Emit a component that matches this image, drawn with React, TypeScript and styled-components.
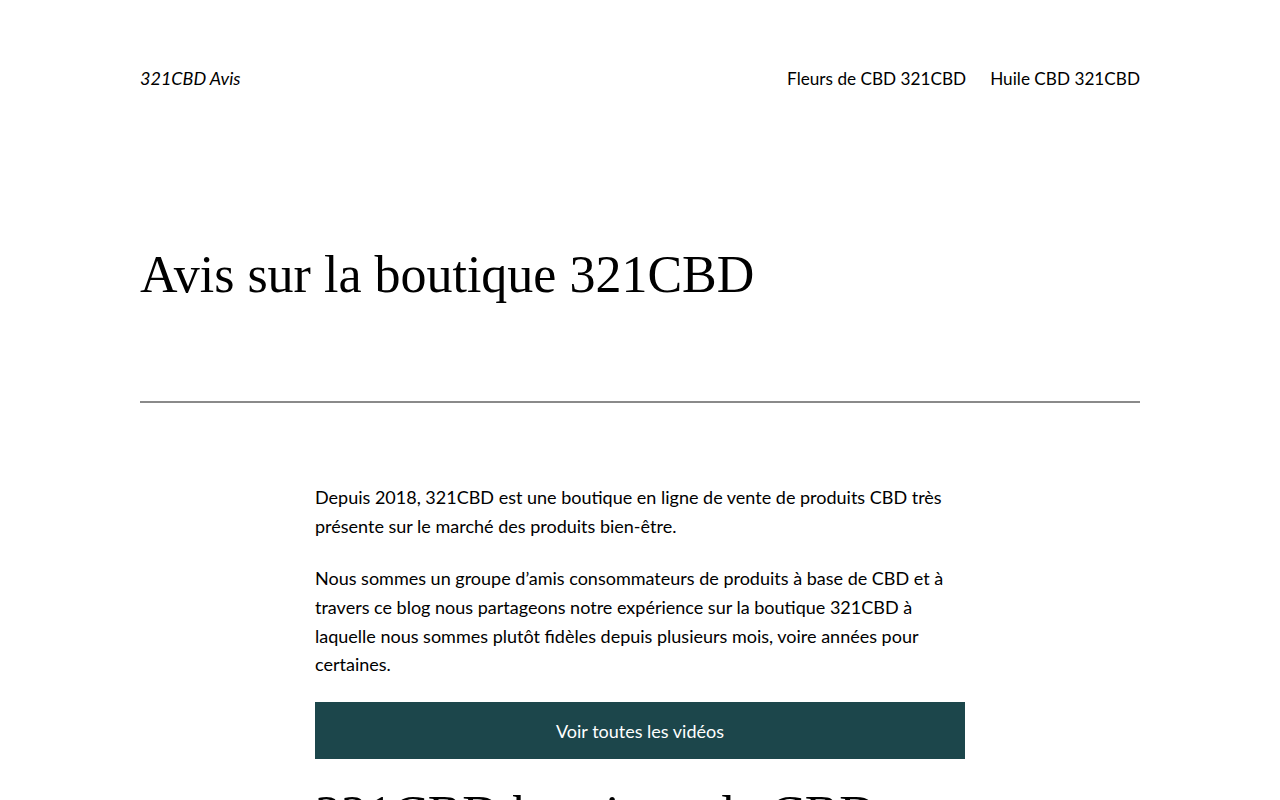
import React from "react";
import styled, { createGlobalStyle } from "styled-components";

const GlobalStyle = createGlobalStyle`
	html, body {
		margin: 0;
		padding: 0;
		background: #ffffff;
	}
	body {
		font-family: "Lato", "Noto Sans", sans-serif;
		color: #000000;
		-webkit-font-smoothing: antialiased;
	}
`;

const Page = styled.div`
	width: 1000px;
	margin: 0 auto;
	padding-top: 66px;
`;

const Header = styled.header`
	display: flex;
	align-items: center;
	justify-content: space-between;
	height: 24px;
`;

const SiteTitle = styled.a`
	font-size: 18px;
	font-style: italic;
	color: #000;
	text-decoration: none;
`;

const Nav = styled.nav`
	display: flex;
	gap: 24px;
`;

const NavLink = styled.a`
	font-size: 17.2px;
	color: #000;
	text-decoration: none;
`;

const PageTitle = styled.h1`
	font-family: "Liberation Serif", "Times New Roman", serif;
	font-weight: 400;
	font-size: 52px;
	line-height: 1.2;
	margin: 154px 0 0;
`;

const Separator = styled.hr`
	border: none;
	border-top: 2px solid #8a8a8a;
	margin: 95px 0 0;
`;

const Content = styled.main`
	width: 650px;
	margin: 80px auto 0;
`;

const Paragraph = styled.p`
	font-size: 18px;
	line-height: 1.6;
	margin: 0 0 23px;
`;

const WideButton = styled.a`
	display: flex;
	align-items: center;
	justify-content: center;
	height: 57px;
	margin-top: 6px;
	background: #1c464b;
	color: #ffffff;
	font-size: 18px;
	text-decoration: none;
`;

const SectionTitle = styled.h2`
	font-family: "Liberation Serif", "Times New Roman", serif;
	font-weight: 400;
	font-size: 52px;
	line-height: 1.2;
	margin: 25px 0 0;
`;

export default function App() {
	return (
		<>
			<GlobalStyle />
			<Page>
				<Header>
					<SiteTitle href="#">321CBD Avis</SiteTitle>
					<Nav>
						<NavLink href="#">Fleurs de CBD 321CBD</NavLink>
						<NavLink href="#">Huile CBD 321CBD</NavLink>
					</Nav>
				</Header>
				<PageTitle>Avis sur la boutique 321CBD</PageTitle>
				<Separator />
				<Content>
					<Paragraph>
						Depuis 2018, 321CBD est une boutique en ligne de vente de produits CBD très
						présente sur le marché des produits bien-être.
					</Paragraph>
					<Paragraph>
						Nous sommes un groupe d’amis consommateurs de produits à base de CBD et à
						travers ce blog nous partageons notre expérience sur la boutique 321CBD à
						laquelle nous sommes plutôt fidèles depuis plusieurs mois, voire années pour
						certaines.
					</Paragraph>
					<WideButton href="#">Voir toutes les vidéos</WideButton>
					<SectionTitle>321CBD boutique de CBD</SectionTitle>
				</Content>
			</Page>
		</>
	);
}
